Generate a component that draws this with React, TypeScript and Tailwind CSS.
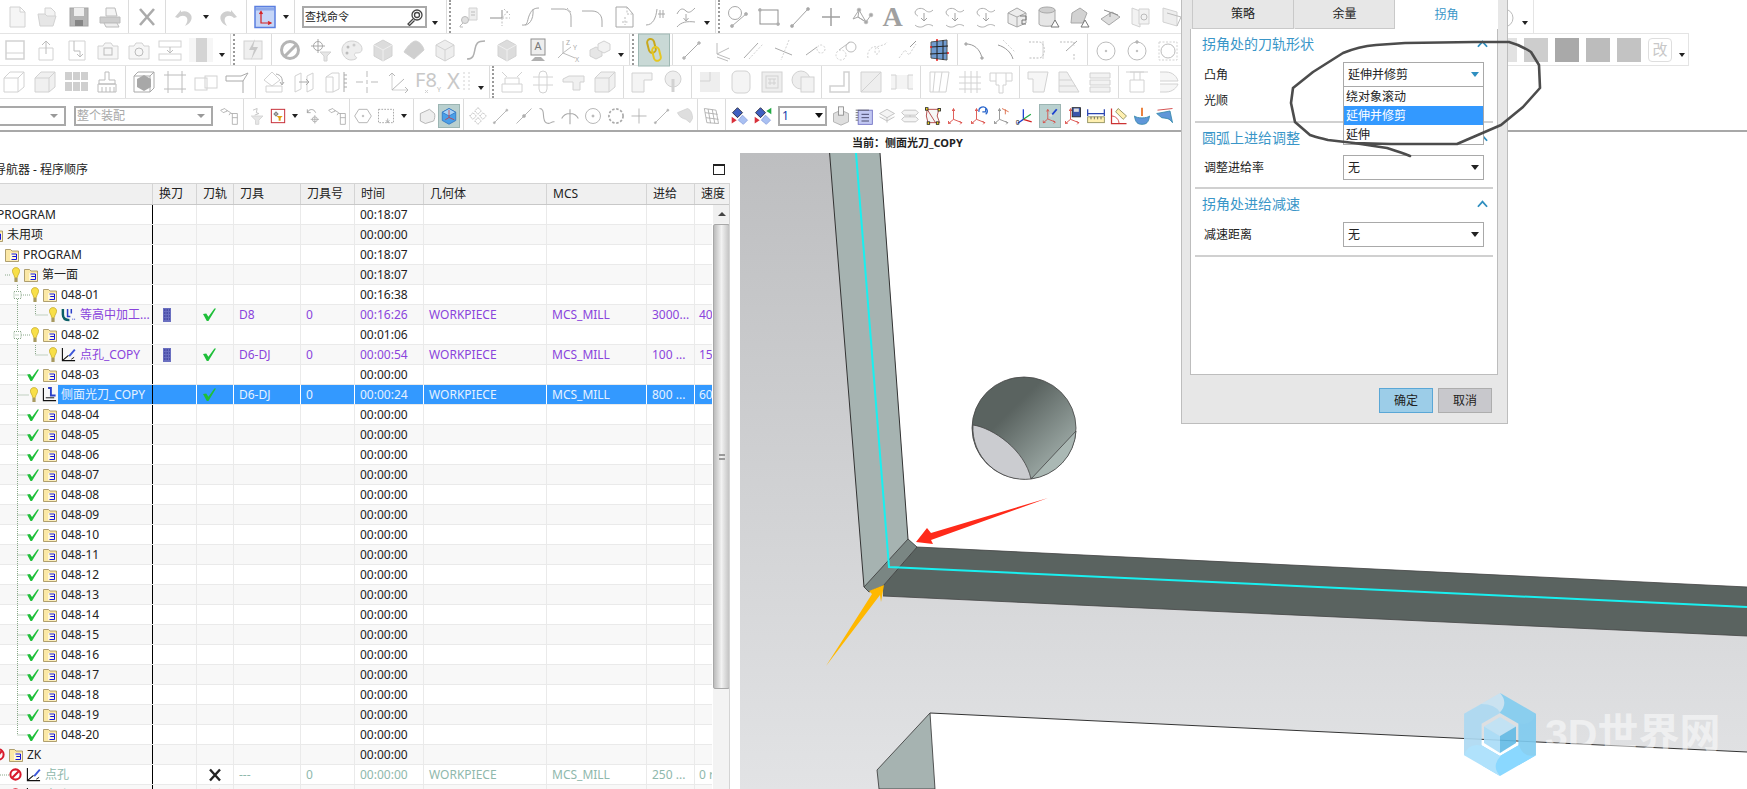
import React from "react";

const G = "#bcbcbc";
const L = "#d2d2d2";
const ax = (extra?: React.ReactNode, c = "#d8403a") => (
  <>
    <path d="M9 4v12l-6 5M9 16l10 4" stroke={c} />
    <path d="M7.500 6L9 3l1.500 3M3 18l0 3 3-.5M16 18.500l3 1.500-2 2" stroke={c} />
    {extra}
  </>
);

const ic: Record<string, React.ReactNode> = {
  new: <path d="M5 2h10l5 5v15H5zM15 2v5h5" fill="#f5f5f5" stroke={L} />,
  open: <><path d="M9 3h6l4 4v5H9z" fill="#f3f3f3" stroke={L} /><path d="M2 9h7l2 2h9l-3 10H4z" fill="#e6e6e6" stroke={L} /></>,
  save: <><rect x="3" y="3" width="18" height="18" fill="#b5b5b5" stroke="#a4a4a4" /><rect x="7" y="3" width="10" height="8" fill="#eeeeee" stroke="none" /><rect x="8" y="15" width="8" height="6" fill="#858585" stroke="none" /></>,
  print: <><path d="M8 3h9l2 8H8z" fill="#f4f4f4" stroke={G} /><path d="M2 12h20v6H2z" fill="#cdcdcd" stroke={G} /><path d="M6 18h13l2 4H8z" fill="#eeeeee" stroke={G} /></>,
  x: <path d="M5 4l14 16M19 4L5 20" stroke="#ababab" strokeWidth="2.600" />,
  undo: <path d="M9 5L3 12l3 1c3-3 7-3 9 0 1 2 0 5-2 8 5-2 8-7 6-11-2-3-6-5-10-3z" fill="#cfcfcf" stroke="none" />,
  redo: <path d="M15 5l6 7-3 1c-3-3-7-3-9 0-1 2 0 5 2 8-5-2-8-7-6-11 2-3 6-5 10-3z" fill="#cfcfcf" stroke="none" />,
  wcs: <><rect x="2" y="1.500" width="20" height="21" fill="#c6d6f7" stroke="#5b7fe0" strokeWidth="1.500" /><rect x="3" y="2.500" width="18" height="3" fill="#8da9ea" stroke="none" /><path d="M8 7v11h10M6.500 9L8 6.500 9.500 9M15 16.500l3 1.500-3 1.500" stroke="#d62020" strokeWidth="1.200" /></>,
  keyfile: <><path d="M12 3h8v12h-8z" fill="#eeeeee" stroke={L} /><path d="M14 7h4M14 10h4" /><circle cx="8" cy="15" r="3.500" fill="#e0e0e0" /><path d="M6 18l-3 3v1h3" /></>,
  cross: <><path d="M2 13h12M14 5v8" stroke="#8e8e8e" /><path d="M14 13h8M14 13v8M14 13l6-7M16 4l6 6" strokeDasharray="2 1.500" /></>,
  scurve: <path d="M3 20c6 1 5-4 7-9s4-8 10-8M6 20c3 0 9-4 8-16" stroke="#a8a8a8" />,
  corner: <><path d="M1 4h12c5 0 8 3 8 8v10" stroke="#a8a8a8" /><path d="M17 3l5 5" strokeDasharray="2 1.500" /></>,
  corner2: <path d="M1 6h10c6 0 10 4 10 10v6" stroke="#a8a8a8" />,
  filecut: <><path d="M4 2h11l6 7v13H4z" stroke="#a8a8a8" /><path d="M15 2v7h6M13 12v8M10 17h7" strokeDasharray="2 1.500" /></>,
  curves: <path d="M3 20c7 0 10-7 11-16M17 5v8M20 5v8M15 9h7" stroke="#a8a8a8" />,
  wave: <><path d="M3 9c3-6 6-6 9-3s6 0 9-3M3 22c4-5 10-6 18-5" stroke="#a8a8a8" /><path d="M12 9v7M9.500 13l2.500 3 2.500-3" stroke="#a8a8a8" /></>,
  circleLine: <><circle cx="9" cy="8" r="6.500" stroke="#a8a8a8" /><path d="M6 21L20 9" stroke="#a8a8a8" /><circle cx="6" cy="21" r="1.500" fill="#a8a8a8" /><circle cx="20" cy="9" r="1.500" fill="#a8a8a8" /></>,
  rectPts: <><rect x="3" y="5" width="18" height="14" stroke="#8f8f8f" /><circle cx="3" cy="5" r="1.500" fill="#a8a8a8" /><circle cx="21" cy="19" r="1.500" fill="#a8a8a8" /></>,
  linePts: <><path d="M4 21L20 4" stroke="#a0a0a0" /><circle cx="4" cy="21" r="1.500" fill="#a0a0a0" /><circle cx="20" cy="4" r="1.500" fill="#a0a0a0" /></>,
  plus: <path d="M12 3v18M3 12h18" stroke="#a0a0a0" strokeWidth="1.500" />,
  net: <><path d="M3 14L9 5l7 12 5-7M9 5l-1 7 8 5-8-5-5 2" stroke="#a8a8a8" /><circle cx="9" cy="5" r="1.800" fill="#a8a8a8" /><circle cx="16" cy="17" r="1.800" fill="#a8a8a8" /><circle cx="21" cy="10" r="1.800" fill="#a8a8a8" /></>,
  blob: <><path d="M3 7c2-5 8-4 10-2s5 3 8 0M3 20c2 2 6 3 9 1s6-2 9 0M3 7c0 3 3 4 3 4" stroke="#b0b0b0" /><path d="M12 8v8M9 13l3 3 3-3" stroke="#a0a0a0" /></>,
  boxcut: <><path d="M3 8l9-5 9 5v10l-9 4-9-4z" fill="#ececec" stroke="#a8a8a8" /><path d="M3 8l9 4 9-4M12 12v10" stroke="#a8a8a8" /><path d="M15 11h6v4h-4v4h4" stroke="#777" /></>,
  cyl: <><path d="M3 5v14c0 3 16 3 16 0V5" fill="#e6e6e6" stroke="#a8a8a8" /><ellipse cx="11" cy="5" rx="8" ry="3" fill="#cfcfcf" stroke="#a8a8a8" /><path d="M15 22l4-7 4 7z" fill="#fff" stroke="#777" /></>,
  prism: <><path d="M5 8l8-5 7 5-4 10H4z" fill="#d2d2d2" stroke="#a8a8a8" /><path d="M14 22l4-7 4 7z" fill="#fff" stroke="#777" /></>,
  plane: <><path d="M3 14l11-7 8 5-11 8z" fill="#dedede" stroke="#a8a8a8" /><path d="M6 5l14 5M12 7v5" stroke="#909090" /></>,
  sheets: <><path d="M3 3l8 3v16l-8-3z" fill="#f2f2f2" stroke={L} /><path d="M10 4h10v15H10z" fill="#f2f2f2" stroke={L} /><circle cx="15" cy="12" r="3" stroke={G} /></>,
  sheets2: <><path d="M3 3l14 4v14L3 17z" fill="#eeeeee" stroke={L} /><path d="M7 8l14 4-4 9" stroke={G} /></>,
  sq: <><rect x="3" y="3" width="18" height="18" stroke={L} strokeWidth="1.500" /><path d="M3 15h18" stroke={L} /></>,
  up: <><path d="M5 10h14v12H5z" stroke={L} /><path d="M12 16V3M8 7l4-4 4 4" stroke={G} /></>,
  down: <><path d="M4 3h16v19H4z" stroke={L} /><path d="M9 3v10h6v6M12 16l3 3 3-3" stroke={G} /></>,
  cam1: <><path d="M2 8h5l2-3h6l2 3h5v13H2z" stroke={L} fill="#f6f6f6" /><rect x="8" y="10" width="8" height="7" stroke={G} /></>,
  cam2: <><path d="M2 8h5l2-3h6l2 3h5v13H2z" stroke={L} fill="#f6f6f6" /><circle cx="12" cy="14" r="4" stroke={G} /></>,
  stack: <><rect x="1" y="3" width="22" height="6" stroke={L} /><rect x="1" y="16" width="22" height="6" stroke={L} /><path d="M12 9v6M9 12l3 3 3-3" stroke={G} /></>,
  graybar: <><rect x="0" y="0" width="24" height="24" fill="#f6f6f6" stroke="none" /><rect x="7" y="0" width="11" height="24" fill="#d4d4d4" stroke="none" /></>,
  bolt: <><rect x="3" y="3" width="18" height="18" fill="#efefef" stroke={L} /><path d="M14 1l-6 11h5l-3 10 7-13h-5z" fill="#c8c8c8" stroke="none" /></>,
  ban: <><circle cx="12" cy="12" r="8.500" stroke="#b5b5b5" strokeWidth="3" /><path d="M7 18L18 7" stroke="#b5b5b5" strokeWidth="3" /></>,
  crossfilter: <><circle cx="9" cy="8" r="4.500" stroke="#a8a8a8" /><path d="M9 1v14M2 8h14" stroke="#a8a8a8" /><path d="M11 14h11l-4 4v5h-3v-5z" fill="#e6e6e6" stroke={L} /></>,
  palette: <><path d="M12 3c6 0 10 4 10 8s-4 4-6 4-2 3 0 4-1 3-5 3C6 22 2 17 2 12S6 3 12 3z" fill="#eeeeee" stroke={L} /><circle cx="8" cy="9" r="1.500" fill="#bbb" stroke="none" /><circle cx="14" cy="7" r="1.500" fill="#ccc" stroke="none" /><circle cx="7" cy="15" r="1.500" fill="#bbb" stroke="none" /></>,
  cube: <><path d="M3 7l9-5 9 5v11l-9 5-9-5z" fill="#dcdcdc" stroke={L} /><path d="M3 7l9 5 9-5M12 12v11" stroke="#efefef" /></>,
  surf: <path d="M2 14C5 9 10 3 14 3c4 1 7 5 8 9l-10 9z" fill="#cfcfcf" stroke={L} />,
  cube2: <><path d="M3 7l9-5 9 5v11l-9 5-9-5z" fill="#eeeeee" stroke={L} /><path d="M3 7l9 5 9-5M12 12v11" stroke={L} /></>,
  scurve2: <path d="M3 21c7 0 7-5 8-10s2-8 10-8" stroke="#b0b0b0" strokeWidth="1.500" />,
  lamp: <><rect x="5" y="1" width="14" height="16" stroke="#8f8f8f" fill="#eeeeee" /><text x="12" y="12" fontSize="11" textAnchor="middle" stroke="none" fill="#777">A</text><path d="M5 23l4-4h6l4 4z" fill="#b0b0b0" stroke="none" /></>,
  xyz: <><path d="M6 3v12l-5 5M6 15l12 5M6 15l8-6" stroke={G} /><text x="9" y="7" fontSize="7" stroke="none" fill="#aaa">Z</text><text x="16" y="12" fontSize="7" stroke="none" fill="#aaa">Y</text><text x="18" y="24" fontSize="7" stroke="none" fill="#aaa">X</text></>,
  cubes: <><path d="M2 12l6-3 6 3v6l-6 3-6-3z" fill="#e6e6e6" stroke={L} /><path d="M10 6l6-3 6 3v6l-6 3-6-3z" fill="#f2f2f2" stroke={L} /></>,
  chain: <><rect x="-3.500" y="-4" width="31" height="32" fill="#c9d9d6" stroke="#9fb8b3" /><rect x="6" y="1" width="7" height="14" rx="3.500" transform="rotate(-14 9 8)" stroke="#c8a81c" strokeWidth="2" /><rect x="11" y="9" width="7" height="14" rx="3.500" transform="rotate(-14 14 16)" stroke="#e5c722" strokeWidth="2" /></>,
  line: <><path d="M5 20L20 5" stroke="#aaa" /><circle cx="5" cy="20" r="1.300" fill="#aaa" /><circle cx="20" cy="5" r="1.300" fill="#aaa" /></>,
  axesL: <><path d="M7 16l13 5M7 19l11 4M7 16l12-6M7 16V5" stroke={G} /></>,
  dline: <><path d="M3 20L17 5" stroke="#aaa" /><path d="M8 21L22 6" stroke={L} strokeDasharray="2 1.500" /></>,
  xline: <><path d="M3 10l17 7" stroke="#aaa" /><path d="M17 2L9 22" stroke={L} strokeDasharray="2 1.500" /></>,
  arc1: <><path d="M3 17L14 9" stroke="#aaa" /><circle cx="18" cy="11" r="4" stroke={L} strokeDasharray="2 1.500" /></>,
  arc2: <><circle cx="7" cy="17" r="5" stroke={L} strokeDasharray="2 1.500" /><circle cx="17" cy="9" r="5" stroke={G} /><path d="M5 12L16 4" stroke={G} /></>,
  arc3: <path d="M3 20c-2-8 6-14 10-10s-3 10-3 3 10-4 12-9" stroke={L} strokeDasharray="2 1.500" />,
  arc4: <><path d="M3 20l6-8 4 5 7-11" stroke={L} strokeDasharray="2 1.500" /><path d="M14 9l6-6" stroke="#999" /></>,
  bluegrid: <><path d="M4 4l16-2v20L4 20z" fill="#6f9bd0" stroke="#555" /><path d="M4 9l17-1M3 16l18-1M10 2v20M16 2v20" stroke="#222" /><circle cx="4" cy="9" r="1" fill="#e22" stroke="none" /><circle cx="21" cy="15" r="1" fill="#e22" stroke="none" /><circle cx="10" cy="2" r="1" fill="#e22" stroke="none" /><circle cx="10" cy="22" r="1" fill="#e22" stroke="none" /></>,
  fil1: <><path d="M2 6c8 0 14 5 16 14" stroke="#999" /><circle cx="2" cy="6" r="1.300" fill="#999" /><circle cx="18" cy="20" r="1.300" fill="#999" /></>,
  fil2: <><path d="M3 7c7 2 13 7 15 14" stroke="#999" /><path d="M8 2l12 12" stroke={L} strokeDasharray="2 1.500" /></>,
  fil3: <><path d="M3 4h10c7 0 7 16 0 16H3" stroke="#bbb" strokeDasharray="2 1.500" /><path d="M17 3v18" stroke={L} /></>,
  fil4: <><path d="M3 4h14M17 4v4M17 16v6" stroke="#bbb" strokeDasharray="2 1.500" /><path d="M9 13L20 3" stroke="#aaa" /></>,
  ring: <><circle cx="12" cy="13" r="9" stroke={G} /><circle cx="12" cy="13" r=".8" fill="#aaa" /></>,
  ring2: <><circle cx="12" cy="13" r="9" stroke={G} /><circle cx="12" cy="13" r=".8" fill="#aaa" /><circle cx="12" cy="4" r="1.300" fill="#aaa" /></>,
  ring3: <><path d="M3 4h18v18H3z" stroke={L} strokeDasharray="2 1.500" /><circle cx="12" cy="13" r="7" stroke={G} /></>,
  box1: <><path d="M8 2h14v15l-6 5H2V8z" stroke={L} /><path d="M2 8h14v14M16 8l6-6" stroke={L} /></>,
  box2: <path d="M8 2h14v15l-6 5H2V8zM2 8h14v14M16 8l6-6" fill="#f0f0f0" stroke={L} />,
  grid4: <path d="M1 2h7v8H1zM9 2h7v8H9zM17 2h7v8h-7zM1 12h7v9H1zM9 12h7v9H9zM17 12h7v9h-7z" fill="#cfcfcf" stroke="none" />,
  brush: <><path d="M10 2h4v8h6v4H4v-4h6z" stroke={G} /><path d="M3 14h18v8H3zM7 17v5M11 17v5M15 17v5M19 17v5" stroke={G} /></>,
  cubegray: <><path d="M2 6h16l4-4M2 6v16h16V6M18 22l4-4V2H6L2 6" stroke="#aaa" /><path d="M5 9l7-4 7 4v8l-7 4-7-4z" fill="#a8a8a8" stroke="none" /></>,
  frame: <path d="M1 5h22M1 19h22M5 1v22M19 1v22" stroke={G} />,
  boxes: <><rect x="1" y="8" width="12" height="12" stroke={L} /><rect x="11" y="6" width="12" height="12" stroke={L} /></>,
  cornerb: <path d="M1 6h15l7-3-5 8v12M1 6v5h17" stroke="#aaa" />,
  rot: <><path d="M2 10l8-8 8 8-8 6z" stroke={L} /><path d="M4 16h16v6H4z" stroke={L} /><path d="M14 4c5 1 7 4 6 10M18 12l2 3 2-3" stroke="#aaa" /></>,
  mirror: <><path d="M2 6l6-3v16l-6 3zM14 6l6-3v16l-6 3z" stroke={L} /><path d="M6 12h10M13 9l3 3-3 3" stroke="#aaa" /></>,
  scale: <><path d="M2 7l6-4h7v16l-6 3H2zM9 7v15M2 7h7" stroke={L} /><path d="M20 2v20M20 5h3M20 9h3M20 13h3M20 17h3" stroke="#aaa" /></>,
  dash: <path d="M12 1v6M12 10v4M12 17v6M1 12h7M16 12h7" stroke={L} strokeWidth="1.500" />,
  angle: <><path d="M6 3v17h16" stroke={L} /><path d="M6 20L18 9M3 6l3-3 3 3M19 17l3 3-3 3" stroke="#b8b8b8" /></>,
  f8: <><text x="-2" y="17" fontSize="20" stroke="none" fill="#c8c8c8" fontFamily="Noto Sans">F8</text><path d="M8 23l3-3M8 20l3 3" stroke={L} /><text x="20" y="22" fontSize="7" stroke="none" fill="#bbb">Y</text></>,
  xd: <><text x="-1" y="19" fontSize="22" stroke="none" fill="#c8c8c8" fontFamily="Noto Sans">X</text><path d="M16 2v20M21 2v20" stroke={L} strokeDasharray="2 2" /></>,
  arrows: <path d="M2 14h20v8H2zM5 14V8h14v6M2 2l5 5M22 2l-5 5" stroke={L} />,
  dumbbell: <><rect x="8" y="1" width="8" height="22" rx="4" stroke={L} /><path d="M2 7h20M2 15h20" stroke={L} /></>,
  shelf: <path d="M1 9l6-3h15v6h-4v8h-7v-8H1z" fill="#f0f0f0" stroke={L} />,
  p1: <path d="M2 3h20v7h-8v12H2z" fill="#f4f4f4" stroke={L} />,
  p2: <><circle cx="12" cy="9" r="8" fill="#eeeeee" stroke={L} /><path d="M12 9v13" stroke={L} strokeWidth="3" /></>,
  p3: <><path d="M2 2h20v20H2z" fill="#eeeeee" stroke="none" /><path d="M12 2v9H2" stroke={L} /></>,
  p4: <rect x="3" y="1" width="18" height="22" rx="5" fill="#f4f4f4" stroke={L} />,
  p5: <><rect x="2" y="2" width="20" height="20" fill="#eeeeee" stroke={L} /><rect x="6" y="6" width="12" height="12" stroke={L} /><path d="M8 9h8M8 13h8M10 9v6M14 9v6" stroke={L} /></>,
  p6: <><circle cx="10" cy="10" r="9" fill="#eeeeee" stroke={L} /><rect x="10" y="7" width="13" height="15" fill="#f2f2f2" stroke={L} /></>,
  p7: <path d="M16 2h5v20H2v-6h14z" stroke={L} strokeWidth="1.500" />,
  p8: <path d="M2 2h20v20H2zM2 22L22 2" fill="#eeeeee" stroke={L} />,
  p9: <><rect x="1" y="5" width="22" height="14" fill="#f4f4f4" stroke="none" /><path d="M1 5h5v14H1M23 5h-5v14h5" stroke={L} /></>,
  p10: <><path d="M3 2h19l-3 20H3z" stroke={L} /><path d="M8 2L6 22M15 2l-3 20" stroke={L} /></>,
  p11: <path d="M1 7h22M1 13h22M1 19h22M7 1v22M13 1v22M19 1v22" stroke={L} />,
  p12: <path d="M1 3h22v8h-6v4h-3v8h-4v-8H7v-4H1zM7 3v8M17 3v8" stroke={L} />,
  p13: <path d="M2 2h20l-4 20H7V9L2 9z" fill="#f6f6f6" stroke={L} />,
  p14: <path d="M2 2h8l12 20H2zM2 10h13M2 16h17" fill="#f0f0f0" stroke={L} />,
  p15: <path d="M2 3h20v5H2zM2 10h20v5H2zM2 17h20v5H2z" fill="#f2f2f2" stroke={L} />,
  p16: <><path d="M1 2h22M5 2h14M9 2v8M15 2v8M5 10h14v12H5z" stroke={L} /></>,
  p17: <path d="M4 2h6c7 0 11 5 12 9H4M4 22h6c7 0 11-5 12-8H4" fill="#f6f6f6" stroke={L} />,
  filt: <><path d="M6 5l5-2-1 5 3 1-5 2" stroke={G} /><path d="M4 12h14l-5 5v5h-4v-5z" fill="#e6e6e6" stroke={L} /></>,
  redbox: <><rect x="2" y="2" width="20" height="20" fill="#fff" stroke="#c7303a" strokeWidth="1.500" /><circle cx="9" cy="9" r="2.500" stroke="#666" /><path d="M9 5v8M5 9h8" stroke="#666" /><path d="M10 12h9l-3 3v4h-3v-4z" fill="#e0a010" stroke="none" /></>,
  rotx: <><path d="M4 8c2-5 8-5 10 0M4 4v4h4" stroke="#999" /><circle cx="13" cy="16" r="3" stroke="#aaa" /><path d="M13 11v10M8 16h10" stroke="#aaa" /></>,
  parts: <><path d="M2 5l5-2 3 3-5 2zM9 5l5 3-2 3M14 9h8v13h-6V9M16 14h6" stroke="#aaa" /></>,
  hex: <><path d="M7 4h10l5 8-5 8H7l-5-8z" stroke="#aaa" /><circle cx="12" cy="12" r="1" fill="#aaa" /></>,
  dashrect: <><rect x="3" y="4" width="18" height="16" stroke="#999" strokeDasharray="2 1.500" /><path d="M14 20v-5M12 17l2 3 2-3" stroke="#aaa" /></>,
  shaded: <path d="M4 9l11-5 6 5c1 3 0 7-1 9l-10 3-6-3z" fill="#eeeeee" stroke="#aaa" />,
  activecube: <><path d="M3 7l9-5 9 5v11l-9 5-9-5z" fill="#4a9fe8" stroke="#2a70c0" /><path d="M3 7l9 5 9-5-9-5z" fill="#a6d2f8" stroke="#2a70c0" /><path d="M12 4v10l-5 3M12 14l7 3" stroke="#d63030" /></>,
  dots: <path d="M12 2l4 4-4 4-4-4zM12 14l4 4-4 4-4-4zM2 12l4-4 4 4-4 4zM14 12l4-4 4 4-4 4z" stroke="#aaa" strokeDasharray="2 1" />,
  sline: <><path d="M4 20L19 5" stroke="#aaa" /><circle cx="19" cy="5" r="1.200" fill="#aaa" /><circle cx="4" cy="20" r="1.200" fill="#aaa" /></>,
  sline2: <><path d="M3 21L21 3" stroke="#aaa" /><circle cx="12" cy="12" r="1.800" fill="#aaa" /></>,
  curl: <path d="M3 3c8 0 2 14 8 17s5-2 10-1" stroke="#aaa" strokeWidth="1.300" />,
  arch: <path d="M2 15c4-8 16-8 20 0M12 4v18" stroke="#aaa" strokeWidth="1.300" />,
  ringc: <><circle cx="12" cy="12" r="9" stroke="#aaa" /><circle cx="12" cy="12" r="1.300" fill="#aaa" /></>,
  ringd: <circle cx="12" cy="12" r="8.500" stroke="#aaa" strokeWidth="2" strokeDasharray="3 2" />,
  plusf: <path d="M12 3v18M3 12h18" stroke="#aaa" />,
  shell: <path d="M3 8l12-5c5 2 6 8 6 12l-3 5-5-4c-4-1-8-3-10-8z" fill="#dedede" stroke={L} />,
  meshg: <path d="M4 3l14 2 3 16-14-1zM8.500 3.600l3 17M13.500 4.300l3 16.400M5 8l15 2M6 14l15 2" stroke="#aaa" />,
  dia1: <><path d="M9 2l6 6-6 6-6-6z" fill="#3f5fc0" stroke="#223" /><path d="M15 11l6 6-5 5-6-5z" fill="#a9c0f2" stroke="#8aa0dd" /><path d="M2 13v8l6-4z" fill="#d8303a" stroke="none" /></>,
  dia2: <><path d="M9 2l6 6-6 6-6-6z" fill="#3f5fc0" stroke="#223" /><path d="M15 11l6 6-5 5-6-5z" fill="#a9c0f2" stroke="#8aa0dd" /><path d="M2 13v8l6-4z" fill="#d8303a" stroke="none" /><path d="M22 2v8l-6-4z" fill="#22aa44" stroke="none" /></>,
  pkg: <><path d="M3 9l9-4 9 4v10l-9 4-9-4z" fill="#dedede" stroke="#aaa" /><rect x="9" y="1" width="6" height="10" fill="#f5f5f5" stroke="#888" /></>,
  list: <><rect x="5" y="5" width="17" height="17" fill="#c2c8f2" stroke="#6a6ac0" /><path d="M9 10h9M9 14h9M9 18h9" stroke="#335" /><path d="M2 5h16M2 8h3M2 11h3M2 14h3M2 17h3" stroke="#555" /></>,
  layer1: <path d="M12 4l9 5-9 5-9-5zM3 13l9 5 9-5M12 14v6" stroke={G} fill="#f4f4f4" />,
  layer2: <path d="M5 5h14l3 3-3 3H5L2 8zM5 13h14l3 3-3 3H5l-3-3zM12 11v2" stroke={G} fill="#f4f4f4" />,
  ybox: <><path d="M5 4h14l-2 8 3 8H6l-2-8z" stroke="#a33" fill="#f6f6f6" /><path d="M5 4l10 16" stroke="#a33" /><rect x="3" y="2" width="3" height="3" fill="#ffe020" stroke="#222" /><rect x="18" y="3" width="3" height="3" fill="#ffe020" stroke="#222" /><rect x="16" y="19" width="3" height="3" fill="#ffe020" stroke="#222" /><rect x="5" y="19" width="3" height="3" fill="#ffe020" stroke="#222" /></>,
  a1: ax(),
  a2: ax(<path d="M12 7a5 5 0 1 1 8 3M20 3v4h-4" stroke="#2a66cc" strokeWidth="1.500" />),
  a3: ax(<path d="M12 3l8 4M16 4v6" stroke="#d8603a" />, "#888"),
  a4: <><path d="M10 4v12l-7 5" stroke="#1a3fd0" strokeWidth="1.500" /><path d="M10 16l10 3" stroke="#d02020" strokeWidth="1.500" /><path d="M10 16l9-6" stroke="#22aa44" strokeWidth="1.500" /><text x="1" y="23" fontSize="8" stroke="none" fill="#222">0</text></>,
  a5: ax(<><path d="M15 10l6-7" stroke="#1a3fd0" strokeWidth="2.500" /><circle cx="13" cy="11" r="2" fill="#ddd" stroke="none" /></>),
  a6: ax(<><rect x="11" y="2" width="10" height="11" fill="#3a55aa" stroke="#222" /><rect x="13" y="3" width="6" height="4" fill="#ddd" stroke="none" /></>),
  ruler: <><path d="M2 9h20M2 4v8M22 4v8" stroke="#2a44b0" strokeWidth="1.500" /><rect x="2" y="13" width="20" height="7" fill="#fff0b0" stroke="#885" /><path d="M6 13v3M10 13v3M14 13v3M18 13v3" stroke="#555" /></>,
  protr: <><path d="M3 3v18h18" stroke="#c33" strokeWidth="1.500" /><path d="M3 12c5 0 9 4 9 9" stroke="#c33" /><path d="M11 3l10 9-4 4-9-9z" fill="#fff0b0" stroke="#885" /></>,
  bowl: <><path d="M3 12c3 3 15 3 18 0-1 8-4 10-9 10S4 20 3 12z" fill="#5f96d8" stroke="#38a" /><path d="M12 2v10" stroke="#e86a1a" strokeWidth="2" /></>,
  blueface: <><path d="M2 9l16-3 3 14c-4-6-8-5-13-6z" fill="#5f96d8" stroke="#38a" /><path d="M3 5l18-2" stroke="#c33" /></>,
};

const Ic = ({ n, cls, size = "w-[24px] h-[24px]" }: { n: string; cls: string; size?: string }) => (
  <div className={`${cls} h-full flex items-center justify-center shrink-0`}>
    <svg viewBox="0 0 24 24" className={`${size} overflow-visible`} fill="none" stroke={G} strokeWidth="1">
      {ic[n]}
    </svg>
  </div>
);

const Sep = ({ w = "w-[6px]" }: { w?: string }) => (
  <div className={`${w} h-full flex justify-center shrink-0`}>
    <div className="w-px h-full bg-[#dcdcdc]" />
  </div>
);
const Dots = () => (
  <div className="w-[4px] h-full py-[3px] shrink-0 border-l-2 border-dotted border-[#9a9a9a]" />
);
const Arrow = ({ low, w = "w-[11px]" }: { low?: boolean; w?: string }) => (
  <div className={`${w} h-full flex justify-center shrink-0 ${low ? "items-end pb-[8px]" : "items-center"}`}>
    <div className="w-0 h-0 border-x-[3.500px] border-x-transparent border-t-[4px] border-t-[#222]" />
  </div>
);

type Item = string | React.ReactNode;
function ToolRow({ items, w, cls, size }: { items: Item[]; w: string; cls: string; size?: string }) {
  return (
    <div className={`flex h-[33px] items-center shrink-0 ${cls}`}>
      {items.map((it, i) => {
        if (typeof it !== "string") return <React.Fragment key={i}>{it}</React.Fragment>;
        if (it === "|") return <Sep key={i} />;
        if (it === ":") return <Dots key={i} />;
        if (it === "v") return <Arrow key={i} />;
        if (it === "V") return <Arrow key={i} low />;
        return <Ic key={i} n={it} cls={w} size={size} />;
      })}
    </div>
  );
}

const row1: Item[] = [
  "new", "open", "save", "print", "|", "x", "|", "undo", <Arrow w="w-[13px]" />, "redo", "|", "wcs", "v", "|",
  <div className="ml-[5px] w-[125px] h-[22px] border-2 border-[#a9a9a9] flex items-center justify-between px-[1px] text-[11px] text-[#222] shrink-0">
    <span>查找命令</span>
    <svg viewBox="0 0 18 18" className="w-[18px] h-[18px]" fill="none" stroke="#444" strokeWidth="1.300"><circle cx="11" cy="7" r="5" /><circle cx="11" cy="7" r="2.500" /><path d="M7 11l-5 5 1.500 1.500 5-5" /></svg>
  </div>,
  <Arrow low w="w-[16px]" />, "|", ":", "keyfile", "cross", "scurve", "corner", "corner2", "filecut", "curves", "wave", "V", "|", ":",
  "circleLine", "rectPts", "linePts", "plus", "net",
  <div className="w-[31px] flex justify-center shrink-0 font-['Liberation_Serif',serif] font-bold text-[28px] text-[#a0a0a0]">A</div>,
  "blob", "blob", "blob", "boxcut", "cyl", "prism", "plane", "sheets", "sheets2",
  <div className="w-[301px] shrink-0" />, "ring", "V",
];
const row2: Item[] = [
  <div className="w-0 -ml-[1px]" />,
  "sq", "up", "down", "cam1", "cam2", "stack", "graybar", "V", "|", ":", "bolt", "|",
  "ban", "crossfilter", "palette", "cube", "surf", "cube2", "scurve2", "cube", "lamp", "xyz", "cubes", "V", "|", ":",
  <div className="w-[2px] shrink-0" />, "chain", "|",
  "line", "axesL", "dline", "xline", "arc1", "arc2", "arc3", "arc4", "bluegrid", "|",
  "fil1", "fil2", "fil3", "fil4", "|", "ring", "ring2", "ring3",
  <div className="w-[310px] shrink-0" />,
  <div className="flex gap-[7px] shrink-0">
    <div className="w-[24px] h-[24px] bg-[#e2e2e2]" />
    <div className="w-[24px] h-[24px] bg-[#cdcdcd]" />
    <div className="w-[24px] h-[24px] bg-[#a9a9a9]" />
    <div className="w-[24px] h-[24px] bg-[#bcbcbc]" />
    <div className="w-[24px] h-[24px] bg-[#c3c3c3]" />
    <div className="w-[24px] h-[24px] rounded-[4px] border border-[#dedede] flex items-center justify-center text-[15px] text-[#c8c8c8]">改</div>
  </div>,
  <div className="w-[4px] shrink-0" />, "V",
];
const row3: Item[] = [
  <div className="w-0 -ml-[2px]" />,
  "box1", "box2", "grid4", "brush", "|", "cubegray", "frame", "boxes", "cornerb", "|",
  "rot", "mirror", "scale", "dash", "angle", "f8", "xd", "V", "|", ":",
  "arrows", "dumbbell", "shelf", "box2", "|", "p1", "p2", "|", "p3", "p4", "p5", "p6", "|", "p7", "p8", "p9", "|", "p10", "p11", "p12", "|", "p13", "p14", "p15", "|", "p16", "p17",
];
const row4: Item[] = [
  <div className="w-[70px] -ml-[4px] h-[20px] border-2 border-[#a9a9a9] flex items-center justify-end pr-[6px] shrink-0">
    <div className="w-0 h-0 border-x-[4px] border-x-transparent border-t-[4px] border-t-[#999]" />
  </div>,
  <div className="ml-[8px] w-[139px] h-[20px] border-2 border-[#a9a9a9] flex items-center justify-between pl-[1px] pr-[6px] text-[12px] text-[#a8a8a8] shrink-0">
    <span>整个装配</span>
    <div className="w-0 h-0 border-x-[4px] border-x-transparent border-t-[4px] border-t-[#999]" />
  </div>,
  <div className="w-[4px] shrink-0" />, "parts", "|", "filt",
  <Ic n="redbox" cls="w-[18px]" size="w-[16px] h-[16px]" />, <Arrow w="w-[15px]" />, "rotx", "parts",
  <Sep w="w-[3px]" />, "hex", "dashrect", <Arrow w="w-[14px]" />, <Sep w="w-[4px]" />, "shaded",
  <div className="w-[22px] h-[24px] bg-[#b9d0cf] border border-[#9cb5b3] flex items-center justify-center shrink-0">
    <svg viewBox="0 0 24 24" className="w-[18px] h-[18px]" fill="none" strokeWidth="1">{ic.activecube}</svg>
  </div>,
  <Sep />, "dots", "sline", "sline2", "curl", "arch", "ringc", "ringd", "plusf", "sline", "shell",
  <Sep w="w-[3px]" />, "meshg", "|", "dia1", "dia2",
  <div className="ml-[4px] w-[49px] h-[20px] border-2 border-[#a9a9a9] flex items-center justify-between px-[2px] text-[12px] text-[#123caa] shrink-0">
    <span>1</span>
    <div className="w-0 h-0 border-x-[4px] border-x-transparent border-t-[5px] border-t-[#111]" />
  </div>,
  <div className="w-[2px] shrink-0" />,
  "pkg", "list", "layer1", "layer2", "ybox", "a1", "a2", "a3", "a4",
  <div className="ml-[3px] w-[22px] h-[24px] bg-[#b9d0cf] border border-[#9cb5b3] flex items-center justify-center shrink-0 overflow-hidden">
    <svg viewBox="0 0 24 24" className="w-[18px] h-[18px]" fill="none" strokeWidth="1">{ic.a5}</svg>
  </div>,
  "a6", "ruler", "protr", "bowl", "blueface",
];

/* ---------- table ---------- */
const colW = ["w-[153px]", "w-[44px]", "w-[37px]", "w-[67px]", "w-[54px]", "w-[69px]", "w-[123px]", "w-[100px]", "w-[17px]"];
const heads = ["", "换刀", "刀轨", "刀具", "刀具号", "时间", "几何体", "MCS", "进给", "速度"];

const Bulb = () => (
  <svg viewBox="0 0 8 16" className="w-[8px] h-[16px] shrink-0">
    <path d="M4 .6C6.600.6 7.600 2.400 7.600 4.200 7.600 6.400 5.600 7.800 5.400 10.500H2.600C2.400 7.800.4 6.400.4 4.200.4 2.400 1.400.6 4 .6z" fill="#f8df48" stroke="#b89b12" strokeWidth=".6" />
    <rect x="2.400" y="11" width="3.200" height="4" fill="#a89a60" />
  </svg>
);
const Folder = () => (
  <svg viewBox="0 0 14 14" className="w-[14px] h-[14px] shrink-0">
    <path d="M.5 3V1.500h5L7 3h6.500v10.500H.5z" fill="#fbe8a6" stroke="#9c8a55" strokeWidth=".8" />
    <rect x="5" y="5" width="8" height="7.500" fill="#fff8d8" />
    <path d="M6.500 6h5v2.500h-4M7.500 8.500h4V11.500h-5" fill="none" stroke="#1414d8" strokeWidth="1" />
  </svg>
);
const Check = ({ cls = "w-[12px] h-[12px]" }: { cls?: string }) => (
  <svg viewBox="0 0 12 12" className={`${cls} shrink-0`}>
    <path d="M0 5.500L3 5L5 8L10.500 .5H12L5 12H3.500z" fill="#1fbf3a" />
  </svg>
);
const Ban = () => (
  <svg viewBox="0 0 14 14" className="w-[13px] h-[13px] shrink-0" fill="none">
    <circle cx="7" cy="7" r="5.500" stroke="#d8182a" strokeWidth="2.200" />
    <path d="M3.500 10.500l7-7" stroke="#d8182a" strokeWidth="2.200" />
  </svg>
);
const OpMill = () => (
  <svg viewBox="0 0 16 16" className="w-[15px] h-[15px] shrink-0" fill="none">
    <path d="M2 2v6c0 4 3 6 7 6" stroke="#0b5f66" strokeWidth="2.600" />
    <path d="M7 2v8h3M11 2v5" stroke="#2b3fc8" strokeWidth="1.600" />
    <path d="M12 13h3" stroke="#2b3fc8" strokeDasharray="1 1" />
  </svg>
);
const OpDrill = () => (
  <svg viewBox="0 0 16 16" className="w-[15px] h-[15px] shrink-0" fill="none">
    <path d="M1.500 1v13.500H15M1.500 14.500L8 9" stroke="#111" strokeWidth="1.200" />
    <path d="M8 9l6-7 1.500 1.500-6 7z" fill="#3a55d8" />
    <path d="M11 13l3-2" stroke="#111" />
  </svg>
);
const OpSide = () => (
  <svg viewBox="0 0 16 16" className="w-[15px] h-[15px] shrink-0" fill="none">
    <path d="M1.500 1v13.500H15" stroke="#111" strokeWidth="1.200" />
    <path d="M6.500 1h3v8h5" stroke="#2b3fc8" strokeWidth="2" />
    <path d="M4 11.500h9" stroke="#111" strokeWidth="1" />
  </svg>
);
const ToolChip = () => (
  <svg viewBox="0 0 8 14" className="w-[8px] h-[14px]">
    <rect width="8" height="14" fill="#6a6fc0" />
    <path d="M1 2h6M1 5h6M1 8h6M1 11h6" stroke="#2a2f90" strokeWidth="1" strokeDasharray="1.500 1" />
  </svg>
);

type TR = {
  ml: string;
  icons: React.ReactNode[];
  label: string;
  tree?: string;
  tone?: "purple" | "muted";
  sel?: boolean;
  time: string;
  op?: { tool: string; feed: string; speed: string; chip?: boolean };
  mutedOp?: boolean;
};

const branch = "M17.500 0V20M17.500 10H27";
const mk = (s: string) =>
  ({ ml: "ml-[27px]", icons: [<Check />, <Folder />], label: s, tree: branch, time: "00:00:00" }) as TR;

const rows: TR[] = [
  { ml: "ml-[-3px]", icons: [], label: "PROGRAM", time: "00:18:07" },
  { ml: "ml-[-11px]", icons: [<Folder />], label: "未用项", time: "00:00:00" },
  { ml: "ml-[5px]", icons: [<Folder />], label: "PROGRAM", time: "00:18:07" },
  { ml: "ml-[12px]", icons: [<Bulb />, <Folder />], label: "第一面", tree: "M5 10H11", time: "00:18:07" },
  { ml: "ml-[31px]", icons: [<Bulb />, <Folder />], label: "048-01", tree: "M17.500 0V6M17.500 14V20M21 10H30M14 6.500h7v7h-7zM15.500 10h4", time: "00:16:38" },
  { ml: "ml-[49px]", icons: [<Bulb />, <OpMill />], label: "等高中加工...", tree: "M17.500 0V20M35.500 0V10H48", tone: "purple", time: "00:16:26", op: { tool: "D8", feed: "3000...", speed: "40", chip: true } },
  { ml: "ml-[31px]", icons: [<Bulb />, <Folder />], label: "048-02", tree: "M17.500 0V6M17.500 14V20M21 10H30M14 6.500h7v7h-7zM15.500 10h4", time: "00:01:06" },
  { ml: "ml-[49px]", icons: [<Bulb />, <OpDrill />], label: "点孔_COPY", tree: "M17.500 0V20M35.500 0V10H48", tone: "purple", time: "00:00:54", op: { tool: "D6-DJ", feed: "100 ...", speed: "15", chip: true } },
  mk("048-03"),
  { ml: "ml-[30px]", icons: [<Bulb />, <OpSide />], label: "侧面光刀_COPY", tree: "M17.500 0V20M17.500 10H29", sel: true, time: "00:00:24", op: { tool: "D6-DJ", feed: "800 ...", speed: "60" } },
  ...Array.from({ length: 16 }, (_, i) => mk(`048-${String(i + 4).padStart(2, "0")}`)),
  { ...mk("048-20"), tree: "M17.500 0V10H27" },
  { ml: "ml-[-8px]", icons: [<Ban />, <Folder />], label: "ZK", time: "00:00:00" },
  { ml: "ml-[9px]", icons: [<Ban />, <OpDrill />], label: "点孔", tree: "M0 10H9", tone: "muted", time: "00:00:00", mutedOp: true },
  { ml: "ml-[9px]", icons: [<Ban />, <OpDrill />], label: "点孔", tone: "muted", time: "00:00:00", mutedOp: true },
];

function TableRow({ r, i }: { r: TR; i: number }) {
  const color = r.sel ? "text-[#e6f2ff]" : r.tone === "purple" ? "text-[#8a44dc]" : r.tone === "muted" ? "text-[#8fb8ac]" : "text-[#222]";
  const cell = `shrink-0 h-full flex items-center overflow-hidden whitespace-nowrap border-r ${r.sel ? "border-white bg-[#3399ff]" : "border-[#eaeaea]"}`;
  const op = r.op;
  const m = r.mutedOp;
  return (
    <div className={`flex h-[20px] border-b border-[#eaeaea] ${i % 2 ? "bg-[#f8f8f8]" : "bg-white"} ${color}`}>
      <div className="w-[153px] shrink-0 h-full relative flex items-center overflow-hidden border-r border-black whitespace-nowrap">
        {r.tree && (
          <svg className="absolute left-0 top-0 w-[152px] h-[20px]" fill="none" stroke="#8aa88a" strokeWidth="1" strokeDasharray="1 1">
            <path d={r.tree} />
          </svg>
        )}
        <div className={`flex items-center gap-[4px] h-full flex-1 ${r.ml}`}>
          {r.icons.map((n, k) => <React.Fragment key={k}>{n}</React.Fragment>)}
          {r.sel ? (
            <span className="h-full flex-1 flex items-center bg-[#3399ff] -ml-[3px] pl-[3px]">{r.label}</span>
          ) : (
            <span>{r.label}</span>
          )}
        </div>
      </div>
      <div className={`${colW[1]} ${cell} pl-[10px]`}>{op?.chip && <ToolChip />}</div>
      <div className={`${colW[2]} ${cell} pl-[6px]`}>
        {op && <Check cls="w-[13px] h-[13px]" />}
        {m && <svg viewBox="0 0 14 14" className="w-[14px] h-[14px] ml-[5px]" fill="none"><path d="M2 1.500l10 11M12 1.500l-10 11" stroke="#222" strokeWidth="2.400" /></svg>}
      </div>
      <div className={`${colW[3]} ${cell} pl-[5px]`}>{op?.tool}{m && "---"}</div>
      <div className={`${colW[4]} ${cell} pl-[5px]`}>{op && "0"}{m && "0"}</div>
      <div className={`${colW[5]} ${cell} pl-[5px]`}>{r.time}</div>
      <div className={`${colW[6]} ${cell} pl-[5px]`}>{(op || m) && "WORKPIECE"}</div>
      <div className={`${colW[7]} ${cell} pl-[5px]`}>{(op || m) && "MCS_MILL"}</div>
      <div className={`w-[48px] ${cell} pl-[5px]`}>{op?.feed}{m && "250 ..."}</div>
      <div className={`${colW[8]} ${cell} pl-[4px] border-r-0`}>{op?.speed}{m && "0 r"}</div>
    </div>
  );
}

/* ---------- dialog ---------- */
const Combo = ({ text, blue }: { text: string; blue?: boolean }) => (
  <div className="w-[141px] h-[25px] border border-[#a9a9a9] bg-white flex items-center justify-between pl-[4px] pr-[3px] text-[12px] text-[#222] shrink-0">
    <span>{text}</span>
    <div className={`w-0 h-0 border-x-[4px] border-x-transparent border-t-[5px] ${blue ? "border-t-[#2f8fc0]" : "border-t-[#222]"} mr-[1px]`} />
  </div>
);
const Head = ({ t }: { t: string }) => (
  <div className="h-[30px] flex items-center justify-between pl-[7px] pr-[5px] text-[14px] text-[#3a96c8]">
    <span>{t}</span>
    <svg viewBox="0 0 12 8" className="w-[11px] h-[8px]" fill="none"><path d="M1 7l5-5.500L11 7" stroke="#2f8fc0" strokeWidth="2" /></svg>
  </div>
);
const Field = ({ label, children, cls = "" }: { label: string; children: React.ReactNode; cls?: string }) => (
  <div className={`flex items-center justify-between pl-[9px] pr-[9px] text-[12px] text-[#222] ${cls}`}>
    <span>{label}</span>
    {children}
  </div>
);

export default function App() {
  return (
    <div className="relative w-[1747px] h-[789px] overflow-hidden bg-white text-[12px] font-['Noto_Sans','Noto_Sans_CJK_SC',sans-serif] leading-none">
      {/* toolbars */}
      <div className="h-[132px] border-b-2 border-[#a8a8a8] overflow-hidden">
        <ToolRow items={row1} w="w-[31px]" cls="w-[1534px] pl-[1px] border-r border-[#e4e4e4] h-[32px]" />
        <ToolRow items={row2} w="w-[31px]" cls="w-[1689px] border-y border-r border-[#e4e4e4]" />
        <ToolRow items={row3} w="w-[31px]" cls="w-[1500px] border-b border-[#e4e4e4]" />
        <ToolRow items={row4} w="w-[23px]" size="w-[20px] h-[20px]" cls="w-[1500px]" />
      </div>

      <div className="flex h-[657px]">
        {/* navigator */}
        <div className="w-[740px] shrink-0">
          <div className="h-[51px] flex items-center pt-[24px] -ml-[6px] text-[12px] text-[#222] relative">
            <span>导航器 - 程序顺序</span>
            <div className="absolute left-[719px] top-[32px] w-[12px] h-[11px] border border-[#222] border-t-2" />
          </div>
          <div className="w-[730px] border-t border-r border-[#d4d4d4] h-[606px] overflow-hidden">
            <div className="flex h-[21px] bg-[#f0f0f0] border-b border-[#c8c8c8] text-[#222]">
              {heads.map((h, i) => (
                <div key={i} className={`${i === 9 ? "w-[35px]" : i === 8 ? "w-[48px]" : colW[i]} shrink-0 h-full flex items-center pl-[6px] border-r border-[#d4d4d4]`}>{h}</div>
              ))}
            </div>
            <div className="flex">
              <div className="w-[712px] shrink-0">
                {rows.map((r, i) => <TableRow key={i} r={r} i={i} />)}
              </div>
              {/* scrollbar */}
              <div className="w-[17px] shrink-0 ml-[1px] h-[600px] bg-[#f3f3f3] flex flex-col">
                <div className="h-[18px] flex items-center justify-center bg-[#f0f0f0]">
                  <div className="w-0 h-0 border-x-[4px] border-x-transparent border-b-[4px] border-b-[#444]" />
                </div>
                <div className="h-[465px] mt-px rounded-[2px] border border-[#a8a8a8] bg-gradient-to-r from-[#bcbcbc] via-[#f2f2f2] to-[#c4c4c4] flex items-center justify-center">
                  <div className="w-[6px] h-[6px] border-y-2 border-[#999]" />
                </div>
              </div>
            </div>
          </div>
        </div>

        {/* graphics window */}
        <div className="flex-1 flex flex-col">
          <div className="h-[21px] flex items-center pl-[112px] text-[11px] font-bold text-[#222] shrink-0">当前：侧面光刀_COPY</div>
          <div className="relative flex-1 bg-gradient-to-b from-[#bdbec0] to-[#e2e3e5]">
            <svg viewBox="740 153 1007 636" className="w-full h-full block" fill="none">
              <defs>
                <linearGradient id="hole" x1="0" y1="0" x2="1" y2="1">
                  <stop offset="0.35" stopColor="#5a6360" />
                  <stop offset="1" stopColor="#b4c2be" />
                </linearGradient>
              </defs>
              <path d="M880 153L908 539L917 547L1747 587V153Z" fill="#fff" />
              <path d="M930 713L1747 752V789H935Z" fill="#fff" />
              <path d="M930 713L877 770L879 789H935Z" fill="#a6b3b1" stroke="#333" strokeWidth=".8" />
              <path d="M829.600 153L880 153L908 539L864 587Z" fill="#a6b3b1" />
              <path d="M829.600 153L864 587M880 153L908 539" stroke="#333" strokeWidth="1" />
              <path d="M917 547L1747 587V636L883 596L883 586Z" fill="#5a6360" />
              <path d="M917 547L1747 587M883 596L1747 636" stroke="#444" strokeWidth=".8" />
              <path d="M908 539L917 547L883 586L869 592L864 587Z" fill="#7a8683" stroke="#333" strokeWidth=".8" />
              <path d="M930 713L1747 752" stroke="#333" strokeWidth="1" />
              <path d="M856 153L889 567L1747 607" stroke="#19f0f0" strokeWidth="2" />
              <ellipse cx="1024" cy="428" rx="52" ry="51" fill="url(#hole)" stroke="#444" strokeWidth=".8" />
              <path d="M973 425C993 428 1025 450 1031 479A52 51 0 0 1 973 425Z" fill="#cbccd0" stroke="#444" strokeWidth=".8" />
              <path d="M1031 479L1076 431A52 51 0 0 1 1031 479Z" fill="#aab8b4" stroke="#444" strokeWidth=".8" />
              <path d="M1048 498L931 533L927 528L916 542L933 544L931 540Z" fill="#ff2a1a" />
              <path d="M826 666L872 594L869 591L884 585L881 602L880 595Z" fill="#ffb800" />
            </svg>
            {/* watermark */}
            <div className="absolute left-[724px] top-[540px] flex items-center gap-[9px]">
              <svg viewBox="0 0 72 83" className="w-[72px] h-[83px] opacity-90">
                {["#c8e3f2", "#82cdf0", "#7ecbf0", "#7ed4ff", "#a8dffc", "#acd9f2"].map((c, i) => (
                  <path key={i} d="M0 20.750L36 0L53 10Q60 22 55 31L36 20L17 31Q13 18 0 20.750Z" fill={c} transform={`rotate(${i * 60} 36 41.500)`} />
                ))}
                <path d="M36 24L52 33.500L36 43L20 33.500Z" fill="#bfe3f6" />
                <path d="M20 33.500L36 43V60L20 50Z" fill="#a8dcf8" />
                <path d="M52 33.500L36 43V60L52 50Z" fill="#62bbe6" />
              </svg>
              <span className="text-[41px] font-bold text-white opacity-50 whitespace-nowrap font-['Liberation_Sans','Noto_Sans_CJK_SC',sans-serif]">3D世界网</span>
            </div>
          </div>
        </div>
      </div>

      {/* dialog */}
      <div className="absolute left-[1181px] top-0 w-[327px] h-[424px] bg-[#e7e7e7] border-x border-b border-[#bdbdbd]">
        <div className="flex h-[29px] pl-[10px] text-[12px] text-[#222]">
          <div className="w-[102px] border border-[#c9c9c9] border-t-0 flex items-center justify-center text-[12px]">策略</div>
          <div className="w-[100px] border border-[#c9c9c9] border-t-0 border-l-0 ml-px flex items-center justify-center">余量</div>
          <div className="w-[103px] bg-white flex items-center justify-center text-[#3a96c8]">拐角</div>
        </div>
        <div className="ml-[8px] w-[308px] h-[346px] bg-white border-x border-b border-[#bdbdbd] px-[4px] relative">
          <div className="border-b-2 border-[#d0d0d0] pb-[8px]">
            <Head t="拐角处的刀轨形状" />
            <Field label="凸角" cls="mt-[3px]"><Combo text="延伸并修剪" blue /></Field>
            <Field label="光顺" cls="h-[26px] pt-[2px]"><Combo text="延伸并修剪" /></Field>
          </div>
          <div className="border-b-2 border-[#d0d0d0] pb-[7px]">
            <Head t="圆弧上进给调整" />
            <Field label="调整进给率" cls="mt-[2px]"><Combo text="无" /></Field>
          </div>
          <div className="border-b-2 border-[#d0d0d0] pb-[8px]">
            <Head t="拐角处进给减速" />
            <Field label="减速距离" cls="mt-[3px]"><Combo text="无" /></Field>
          </div>
        </div>
        <div className="flex justify-end gap-[5px] pr-[15px] mt-[13px] text-[12px] text-[#222]">
          <div className="w-[54px] h-[25px] bg-[#9ccde8] border border-[#5aa7d6] flex items-center justify-center">确定</div>
          <div className="w-[54px] h-[25px] bg-[#c8c8cc] border border-[#adadad] flex items-center justify-center">取消</div>
        </div>
        {/* open combo list */}
        <div className="absolute left-[161px] top-[86px] w-[141px] h-[59px] bg-white border border-[#a9a9a9] text-[12px] text-[#222]">
          <div className="h-[19px] flex items-center pl-[2px]">绕对象滚动</div>
          <div className="h-[19px] flex items-center pl-[2px] bg-[#3399ff] text-white">延伸并修剪</div>
          <div className="h-[19px] flex items-center pl-[2px]">延伸</div>
        </div>
      </div>

      {/* hand-drawn annotation */}
      <svg className="absolute left-0 top-0 w-[1747px] h-[789px] pointer-events-none" viewBox="0 0 1747 789" fill="none">
        <path
          d="M1410 156C1400 152 1390 149 1387 148L1354 143L1328 140C1320 138 1315 137 1310 135L1295 122L1291 103L1293 88L1313 72L1343 53C1355 48 1365 46 1376 45L1405 43L1475 42L1509 42C1520 45 1525 48 1531 52L1539 65L1540 88L1523 107L1501 125L1457 144L1391 144L1354 143"
          stroke="#4c4c4c"
          strokeWidth="2.600"
          strokeLinejoin="round"
          strokeLinecap="round"
        />
      </svg>
    </div>
  );
}
